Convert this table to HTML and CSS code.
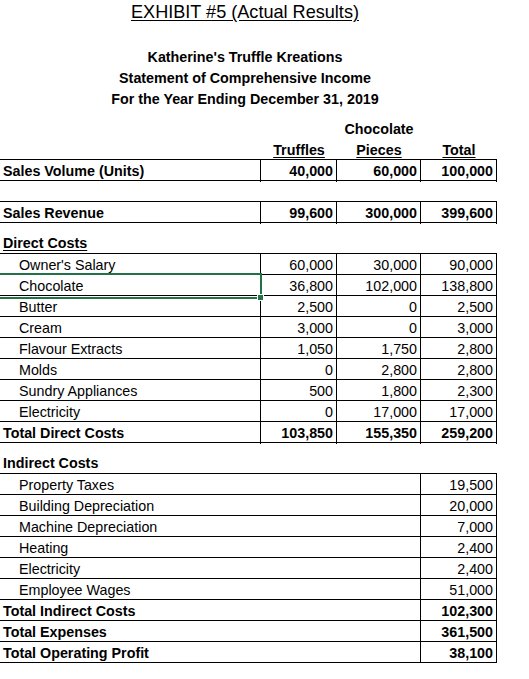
FILE: index.html
```html
<!DOCTYPE html>
<html>
<head>
<meta charset="utf-8">
<link rel="stylesheet" href="styles.css">
</head>
<body>
<div class="sheet">
  <div class="title"><span>EXHIBIT #5 (Actual Results)</span></div>
  <div class="company">
    <div>Katherine's Truffle Kreations</div>
    <div>Statement of Comprehensive Income</div>
    <div>For the Year Ending December 31, 2019</div>
  </div>

  <div class="grid head first">
    <div></div><div></div><div class="hc">Chocolate</div><div></div>
  </div>
  <div class="grid head">
    <div></div><div class="hc"><u>Truffles</u></div><div class="hc"><u>Pieces</u></div><div class="hc"><u>Total</u></div>
  </div>

  <div class="grid row last bold">
    <div class="lbl v">Sales Volume (Units)</div><div class="num v">40,000</div><div class="num v">60,000</div><div class="num v">100,000</div>
  </div>
  <div class="gap1"></div>
  <div class="grid row last bold">
    <div class="lbl v">Sales Revenue</div><div class="num v">99,600</div><div class="num v">300,000</div><div class="num v">399,600</div>
  </div>

  <div class="section"><u>Direct Costs</u></div>
  <div class="grid row">
    <div class="lbl in v">Owner's Salary</div><div class="num v">60,000</div><div class="num v">30,000</div><div class="num v">90,000</div>
  </div>
  <div class="grid row">
    <div class="lbl in v sel">Chocolate<span class="selbox"><span class="handle"></span></span></div><div class="num v">36,800</div><div class="num v">102,000</div><div class="num v">138,800</div>
  </div>
  <div class="grid row">
    <div class="lbl in v">Butter</div><div class="num v">2,500</div><div class="num v">0</div><div class="num v">2,500</div>
  </div>
  <div class="grid row">
    <div class="lbl in v">Cream</div><div class="num v">3,000</div><div class="num v">0</div><div class="num v">3,000</div>
  </div>
  <div class="grid row">
    <div class="lbl in v">Flavour Extracts</div><div class="num v">1,050</div><div class="num v">1,750</div><div class="num v">2,800</div>
  </div>
  <div class="grid row">
    <div class="lbl in v">Molds</div><div class="num v">0</div><div class="num v">2,800</div><div class="num v">2,800</div>
  </div>
  <div class="grid row">
    <div class="lbl in v">Sundry Appliances</div><div class="num v">500</div><div class="num v">1,800</div><div class="num v">2,300</div>
  </div>
  <div class="grid row">
    <div class="lbl in v">Electricity</div><div class="num v">0</div><div class="num v">17,000</div><div class="num v">17,000</div>
  </div>
  <div class="grid row last bold">
    <div class="lbl v">Total Direct Costs</div><div class="num v">103,850</div><div class="num v">155,350</div><div class="num v">259,200</div>
  </div>

  <div class="section">Indirect Costs</div>
  <div class="grid row">
    <div class="lbl in">Property Taxes</div><div></div><div class="v"></div><div class="num v">19,500</div>
  </div>
  <div class="grid row">
    <div class="lbl in">Building Depreciation</div><div></div><div class="v"></div><div class="num v">20,000</div>
  </div>
  <div class="grid row">
    <div class="lbl in">Machine Depreciation</div><div></div><div class="v"></div><div class="num v">7,000</div>
  </div>
  <div class="grid row">
    <div class="lbl in">Heating</div><div></div><div class="v"></div><div class="num v">2,400</div>
  </div>
  <div class="grid row">
    <div class="lbl in">Electricity</div><div></div><div class="v"></div><div class="num v">2,400</div>
  </div>
  <div class="grid row">
    <div class="lbl in">Employee Wages</div><div></div><div class="v"></div><div class="num v">51,000</div>
  </div>
  <div class="grid row bold">
    <div class="lbl">Total Indirect Costs</div><div></div><div class="v"></div><div class="num v">102,300</div>
  </div>
  <div class="grid row bold">
    <div class="lbl">Total Expenses</div><div></div><div class="v"></div><div class="num v">361,500</div>
  </div>
  <div class="grid row last bold">
    <div class="lbl">Total Operating Profit</div><div></div><div class="v"></div><div class="num v">38,100</div>
  </div>
</div>
</body>
</html>
```

FILE: styles.css
```css
html, body {
  margin: 0;
  padding: 0;
  background: #ffffff;
}

.sheet {
  font-family: "Liberation Sans", Arial, sans-serif;
  font-size: 14.3px;
  color: #000;
  width: 529px;
}

.title {
  width: 490px;
  height: 24px;
  line-height: 24px;
  text-align: center;
  font-size: 18.1px;
  text-decoration: underline;
  text-underline-offset: 2px;
  margin-bottom: 22px;
}

.company {
  width: 490px;
  text-align: center;
  font-weight: bold;
  line-height: 21px;
  padding-top: 1px;
  height: 62px;
  margin-bottom: 8px;
}

.grid {
  display: grid;
  grid-template-columns: 261px 76px 84px 76px;
  width: 497px;
  box-sizing: border-box;
}

.head {
  height: 21px;
  font-weight: bold;
  line-height: 24px;
}

.hc {
  text-align: center;
}

.hc u {
  text-underline-offset: 2px;
}

.row {
  height: 21px;
  border-top: 1px solid #000;
  line-height: 22px;
}

.row.last {
  height: 22px;
  border-bottom: 1px solid #000;
}

.bold {
  font-weight: bold;
}

.v {
  border-right: 1px solid #000;
}

.lbl {
  padding-left: 3px;
  white-space: nowrap;
}

.lbl.in {
  padding-left: 19px;
}

.num {
  text-align: right;
  padding-right: 3px;
}

.gap1 {
  height: 20px;
}

.section {
  height: 21px;
  line-height: 23px;
  margin-top: 9px;
  padding-left: 3px;
  font-weight: bold;
}

.section u {
  text-underline-offset: 2px;
}

.sel {
  position: relative;
}

.selbox {
  position: absolute;
  left: 0;
  top: -2px;
  right: -2px;
  bottom: -2px;
  border: 2px solid #217346;
  border-left: none;
}

.handle {
  position: absolute;
  right: -4px;
  bottom: -4px;
  width: 5px;
  height: 5px;
  background: #217346;
  border: 1px solid #fff;
}
```
